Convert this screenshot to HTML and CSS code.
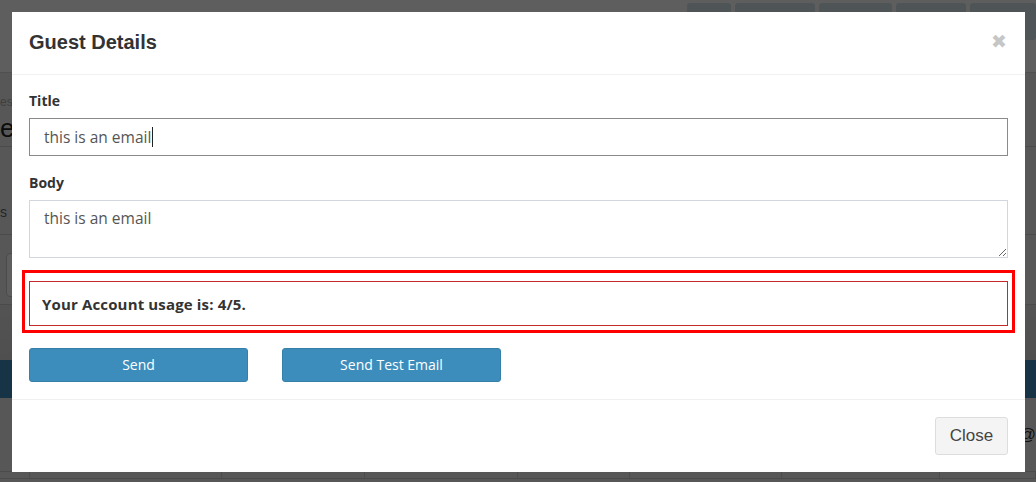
FILE: index.html
```html
<!DOCTYPE html>
<html lang="en">
<head>
<meta charset="utf-8">
<title>Guest Details</title>
<link rel="stylesheet" href="styles.css">
</head>
<body>
<div class="page">
  <header class="topbar">
    <div class="tb-actions">
      <span class="tb-btn w44"></span>
      <span class="tb-btn w80"></span>
      <span class="tb-btn w73"></span>
      <span class="tb-btn w70"></span>
      <span class="tb-btn w66"></span>
    </div>
  </header>
  <section class="content">
    <div class="crumbs">es</div>
    <h1 class="page-title">es</h1>
    <div class="tabs"><span>s</span></div>
    <div class="toolbar"><span class="tool-box"></span></div>
    <div class="spacer"></div>
    <div class="bluebar"></div>
    <div class="rows"><span class="at">@</span></div>
    <div class="table-row">
      <span class="cell c1"></span><span class="cell c2"></span><span class="cell c3"></span><span class="cell c4"></span><span class="cell c5"></span><span class="cell c6"></span><span class="cell c7"></span><span class="cell c8"></span>
    </div>
  </section>
</div>

<div class="backdrop"></div>

<div class="modal">
  <div class="modal-header">
    <h4 class="modal-title">Guest Details</h4>
    <span class="close">&#10006;</span>
  </div>
  <div class="modal-body">
    <div class="form-group">
      <label class="label">Title</label>
      <div class="input focused">this is an email<span class="caret"></span></div>
    </div>
    <div class="form-group">
      <label class="label">Body</label>
      <textarea class="textarea">this is an email</textarea>
    </div>
    <div class="highlight">
      <div class="usage">Your Account usage is: 4/5.</div>
    </div>
    <div class="actions">
      <button class="btn-primary">Send</button>
      <button class="btn-primary">Send Test Email</button>
    </div>
  </div>
  <div class="modal-footer">
    <button class="btn-default">Close</button>
  </div>
</div>
</body>
</html>
```
FILE: styles.css
```css
* { box-sizing: border-box; }
html, body { margin: 0; padding: 0; }
body {
  width: 1036px;
  height: 482px;
  overflow: hidden;
  background: #ededed;
  font-family: "Open Sans", Arial, sans-serif;
}

/* underlying page */
.page { width: 1036px; }
.topbar {
  height: 73px;
  background: #ffffff;
  border-bottom: 1px solid #d8d8d8;
  display: flex;
  justify-content: flex-end;
  padding-top: 3px;
}
.tb-actions { display: flex; gap: 4px; align-items: flex-start; }
.tb-btn { display: block; height: 37px; background: #d5e6eb; border-radius: 3px; }
.w44 { width: 44px; }
.w80 { width: 80px; }
.w73 { width: 73px; }
.w70 { width: 70px; }
.w66 { width: 66px; }

.content { position: relative; }
.crumbs {
  font-family: "Liberation Sans", Arial, sans-serif;
  font-size: 12px;
  line-height: 14px;
  color: #aaa;
  margin: 22px 0 0 0;
  white-space: nowrap;
}
.page-title {
  font-family: "Liberation Sans", Arial, sans-serif;
  font-size: 26px;
  line-height: 30px;
  font-weight: 400;
  color: #222;
  margin: 4px 0 0 -3px;
  padding-left: 3px;
  white-space: nowrap;
  height: 34px;
  border-bottom: 1px solid #ccc;
}
.tabs {
  font-family: "Liberation Sans", Arial, sans-serif;
  font-size: 14px;
  color: #666;
  height: 88px;
  padding-top: 57px;
  border-bottom: 1px solid #ccc;
}
.toolbar {
  height: 70px;
  padding: 18px 0 0 6px;
  border-bottom: 1px solid #ccc;
}
.tool-box { display: block; width: 60px; height: 44px; border: 1px solid #ccc; border-radius: 4px; background: #fff; }
.spacer { height: 55px; background: linear-gradient(#e2e2e2, #d6d6d6); }
.bluebar { height: 38px; background: #3c8dbc; }
.rows {
  height: 74px;
  display: flex;
  justify-content: flex-end;
  align-items: center;
  border-bottom: 1px solid #ccc;
}
.at { font-family: "Liberation Sans", Arial, sans-serif; font-size: 17px; color: #333; margin-right: 0; }
.table-row { display: flex; height: 8px; }
.cell { display: block; border-right: 1px solid #cfcfcf; border-bottom: 1px solid #cfcfcf; height: 7px; }
.c1 { width: 30px; }
.c2 { width: 192px; }
.c3 { width: 143px; }
.c4 { width: 153px; }
.c5 { width: 112px; }
.c6 { width: 152px; }
.c7 { width: 158px; }
.c8 { width: 96px; }

.backdrop {
  position: fixed;
  inset: 0;
  background: rgba(0, 0, 0, 0.63);
}

/* modal */
.modal {
  position: fixed;
  top: 12px;
  left: 12px;
  width: 1013px;
  height: 460px;
  background: #fff;
  display: flex;
  flex-direction: column;
}
.modal-header {
  height: 63px;
  padding: 0 17px 0 17px;
  border-bottom: 1px solid #f0f0f0;
  display: flex;
  align-items: center;
  justify-content: space-between;
}
.modal-title {
  margin: 0 0 1px 0;
  font-family: "Liberation Sans", Arial, sans-serif;
  font-size: 20px;
  font-weight: 700;
  color: #333;
}
.close {
  font-family: "DejaVu Sans", sans-serif;
  font-size: 19px;
  line-height: 20px;
  color: #c6c6c6;
  margin: 0 1px 4px 0;
}
.modal-body {
  padding: 16px 17px 17px 17px;
}
.form-group { margin-bottom: 17px; }
.label {
  display: block;
  font-size: 14px;
  font-weight: 700;
  color: #333;
  line-height: 20px;
  margin-bottom: 7px;
}
.input {
  height: 38px;
  border: 1px solid #8a8a8a;
  padding: 0 14px;
  font-size: 15.5px;
  color: #555;
  display: flex;
  align-items: center;
}
.caret { display: inline-block; width: 1px; height: 20px; background: #222; margin-left: 1px; }
.textarea {
  display: block;
  width: 100%;
  height: 58px;
  border: 1px solid #d2d6de;
  padding: 6px 14px;
  font-family: "Open Sans", Arial, sans-serif;
  font-size: 15.5px;
  color: #555;
  resize: vertical;
  outline: none;
  margin: 0;
}
.form-group + .highlight { margin-top: -5px; }
.highlight {
  margin: 0 -7px;
  border: 3px solid #ff0000;
  padding: 8px 4px 4px 4px;
}
.usage {
  height: 45px;
  border: 1px solid #c42a2a;
  padding: 0 12px;
  display: flex;
  align-items: center;
  font-size: 15px;
  letter-spacing: 0.15px;
  font-weight: 700;
  color: #333;
}
.actions {
  display: flex;
  gap: 34px;
  margin-top: 15px;
}
.btn-primary {
  width: 219px;
  height: 34px;
  background: #3c8dbc;
  border: 1px solid #367fa9;
  border-radius: 3px;
  color: #fff;
  font-family: "Open Sans", Arial, sans-serif;
  font-size: 14px;
  line-height: 30px;
  padding: 0;
}
.modal-footer {
  flex: 1;
  border-top: 1px solid #f0f0f0;
  display: flex;
  justify-content: flex-end;
  align-items: flex-start;
  padding: 17px 17px 0 0;
}
.btn-default {
  width: 73px;
  height: 38px;
  background: #f4f4f4;
  border: 1px solid #dddddd;
  border-radius: 3px;
  color: #444;
  font-family: "Liberation Sans", Arial, sans-serif;
  font-size: 17px;
  padding: 0;
}
```
